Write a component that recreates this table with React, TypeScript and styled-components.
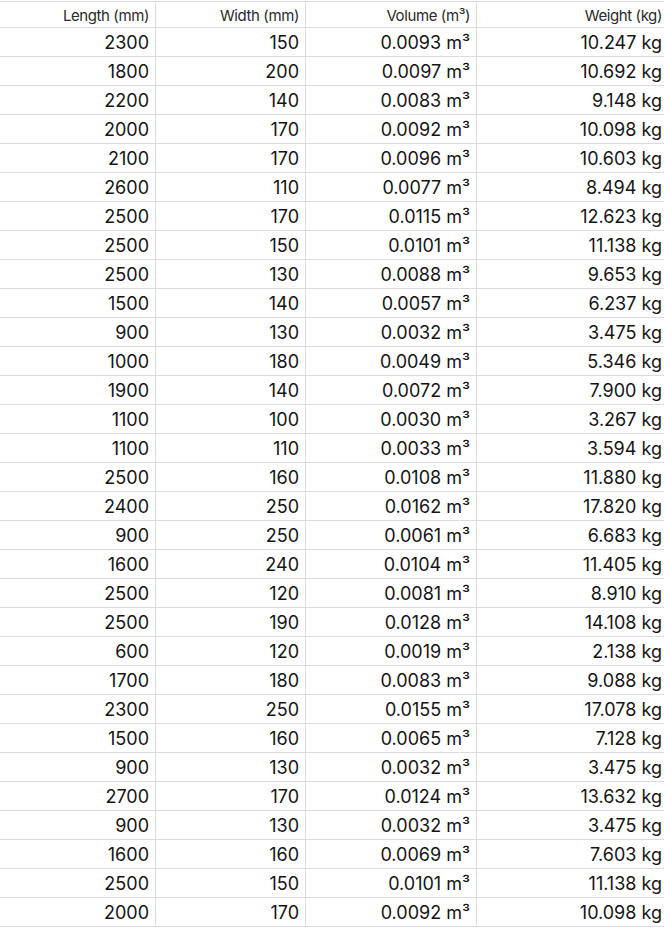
import React from 'react';
import styled, {createGlobalStyle} from 'styled-components'

const GlobalStyle = createGlobalStyle`
  html, body {
    margin: 0;
    padding: 0;
    background: #ffffff;
    overflow: hidden;
  }
`

const rows: [number, number, string, string][] = [
    [2300, 150, '0.0093', '10.247'],
    [1800, 200, '0.0097', '10.692'],
    [2200, 140, '0.0083', '9.148'],
    [2000, 170, '0.0092', '10.098'],
    [2100, 170, '0.0096', '10.603'],
    [2600, 110, '0.0077', '8.494'],
    [2500, 170, '0.0115', '12.623'],
    [2500, 150, '0.0101', '11.138'],
    [2500, 130, '0.0088', '9.653'],
    [1500, 140, '0.0057', '6.237'],
    [900, 130, '0.0032', '3.475'],
    [1000, 180, '0.0049', '5.346'],
    [1900, 140, '0.0072', '7.900'],
    [1100, 100, '0.0030', '3.267'],
    [1100, 110, '0.0033', '3.594'],
    [2500, 160, '0.0108', '11.880'],
    [2400, 250, '0.0162', '17.820'],
    [900, 250, '0.0061', '6.683'],
    [1600, 240, '0.0104', '11.405'],
    [2500, 120, '0.0081', '8.910'],
    [2500, 190, '0.0128', '14.108'],
    [600, 120, '0.0019', '2.138'],
    [1700, 180, '0.0083', '9.088'],
    [2300, 250, '0.0155', '17.078'],
    [1500, 160, '0.0065', '7.128'],
    [900, 130, '0.0032', '3.475'],
    [2700, 170, '0.0124', '13.632'],
    [900, 130, '0.0032', '3.475'],
    [1600, 160, '0.0069', '7.603'],
    [2500, 150, '0.0101', '11.138'],
    [2000, 170, '0.0092', '10.098'],
]

const headers = ['Length (mm)', 'Width (mm)', 'Volume (m³)', 'Weight (kg)']

export default function App() {
    return (
        <>
            <GlobalStyle/>
            <Sheet>
                <Grid>
                    {headers.map((h) => (
                        <HeadCell key={h}>{h}</HeadCell>
                    ))}
                    {rows.map((r, index) => (
                        <React.Fragment key={`row_${index}`}>
                            <Cell>{r[0]}</Cell>
                            <Cell>{r[1]}</Cell>
                            <Cell>{r[2]} m³</Cell>
                            <Cell>{r[3]} kg</Cell>
                        </React.Fragment>
                    ))}
                </Grid>
            </Sheet>
        </>
    );
}

const Sheet = styled.div`
  width: 664px;
  overflow: hidden;
  padding-top: 1px;
`

const Grid = styled.div`
  display: grid;
  grid-template-columns: 156px 150px 171px 192px;
  grid-auto-rows: 29px;
  grid-template-rows: 26px;
  width: 669px;
  border-top: 1px solid #dcdcdc;
  font-family: Inter, "Noto Sans", sans-serif;
`

const Cell = styled.div`
  box-sizing: border-box;
  display: flex;
  align-items: center;
  justify-content: flex-end;
  padding: 1px 6px 0 0;
  border-right: 1px solid #dcdcdc;
  border-bottom: 1px solid #dcdcdc;
  font-size: 18px;
  color: #141414;
  white-space: nowrap;
  letter-spacing: 0;
`

const HeadCell = styled(Cell)`
  font-size: 15px;
  color: #2a2a2a;
  letter-spacing: -0.4px;
`
